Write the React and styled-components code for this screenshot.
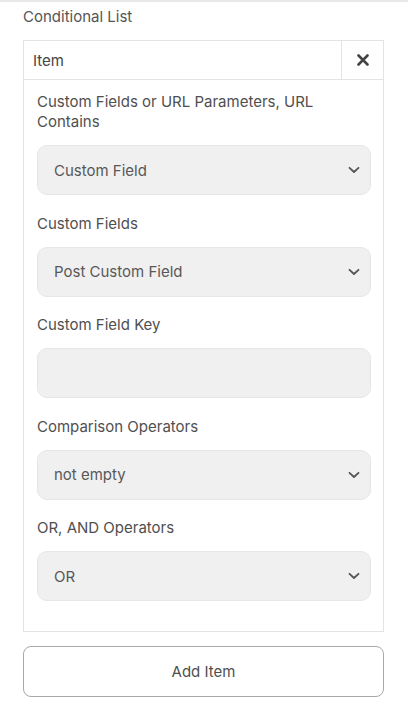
import React from "react";
import styled, { createGlobalStyle } from "styled-components";

const Global = createGlobalStyle`
  html, body { margin: 0; padding: 0; background: #fff; }
  body { font-family: Inter, "Noto Sans", sans-serif; color: #4a4a4a; }
  * { box-sizing: border-box; }
`;

const Page = styled.div`
  border-top: 2px solid #e8e8e8;
  padding: 5px 24px 0 23px;
`;

const Title = styled.div`
  font-size: 15px;
  line-height: 20px;
  color: #555;
  margin-bottom: 13px;
`;

const Box = styled.div`
  border: 1px solid #e3e3e3;
`;

const Header = styled.div`
  display: flex;
  height: 39px;
  border-bottom: 1px solid #e3e3e3;
`;

const HeaderLabel = styled.div`
  flex: 1;
  display: flex;
  align-items: center;
  padding-left: 9px;
  font-size: 15px;
  color: #444;
`;

const CloseCell = styled.div`
  width: 42px;
  border-left: 1px solid #e3e3e3;
  display: flex;
  align-items: center;
  justify-content: center;
`;

const Body = styled.div`
  padding: 12px 12px 11.5px 13px;
`;

const Field = styled.div`
  display: flex;
  flex-direction: column;
  gap: 13px;
  margin-bottom: 18.5px;
`;

const Label = styled.div`
  font-size: 15px;
  line-height: 20px;
  color: #4f4f4f;
`;

const Control = styled.div`
  height: 50px;
  border: 1px solid #e6e6e6;
  background: #f0f0f0;
  border-radius: 10px;
  display: flex;
  align-items: center;
  justify-content: space-between;
  padding: 0 10px 0 16px;
  font-size: 15px;
  color: #585858;
`;

const AddButton = styled.div`
  margin-top: 14px;
  height: 51px;
  border: 1px solid #a8a8a8;
  border-radius: 8px;
  display: flex;
  align-items: center;
  justify-content: center;
  font-size: 15px;
  color: #4f4f4f;
`;

const Chevron = () => (
  <svg width="12" height="8" viewBox="0 0 12 8">
    <path d="M1.5 1.8 L6 6 L10.5 1.8" fill="none" stroke="#555" strokeWidth="1.8" strokeLinecap="round" strokeLinejoin="round" />
  </svg>
);

const CloseIcon = () => (
  <svg width="12" height="12" viewBox="0 0 12 12">
    <path d="M1.5 1.5 L10.5 10.5 M10.5 1.5 L1.5 10.5" stroke="#444" strokeWidth="2.6" strokeLinecap="round" />
  </svg>
);

const fields = [
  { label: "Custom Fields or URL Parameters, URL Contains", value: "Custom Field", select: true },
  { label: "Custom Fields", value: "Post Custom Field", select: true },
  { label: "Custom Field Key", value: "", select: false },
  { label: "Comparison Operators", value: "not empty", select: true },
  { label: "OR, AND Operators", value: "OR", select: true },
];

export default function App() {
  return (
    <Page>
      <Global />
      <Title>Conditional List</Title>
      <Box>
        <Header>
          <HeaderLabel>Item</HeaderLabel>
          <CloseCell><CloseIcon /></CloseCell>
        </Header>
        <Body>
          {fields.map((f) => (
            <Field key={f.label}>
              <Label>{f.label}</Label>
              <Control>
                <span>{f.value}</span>
                {f.select && <Chevron />}
              </Control>
            </Field>
          ))}
        </Body>
      </Box>
      <AddButton>Add Item</AddButton>
    </Page>
  );
}
